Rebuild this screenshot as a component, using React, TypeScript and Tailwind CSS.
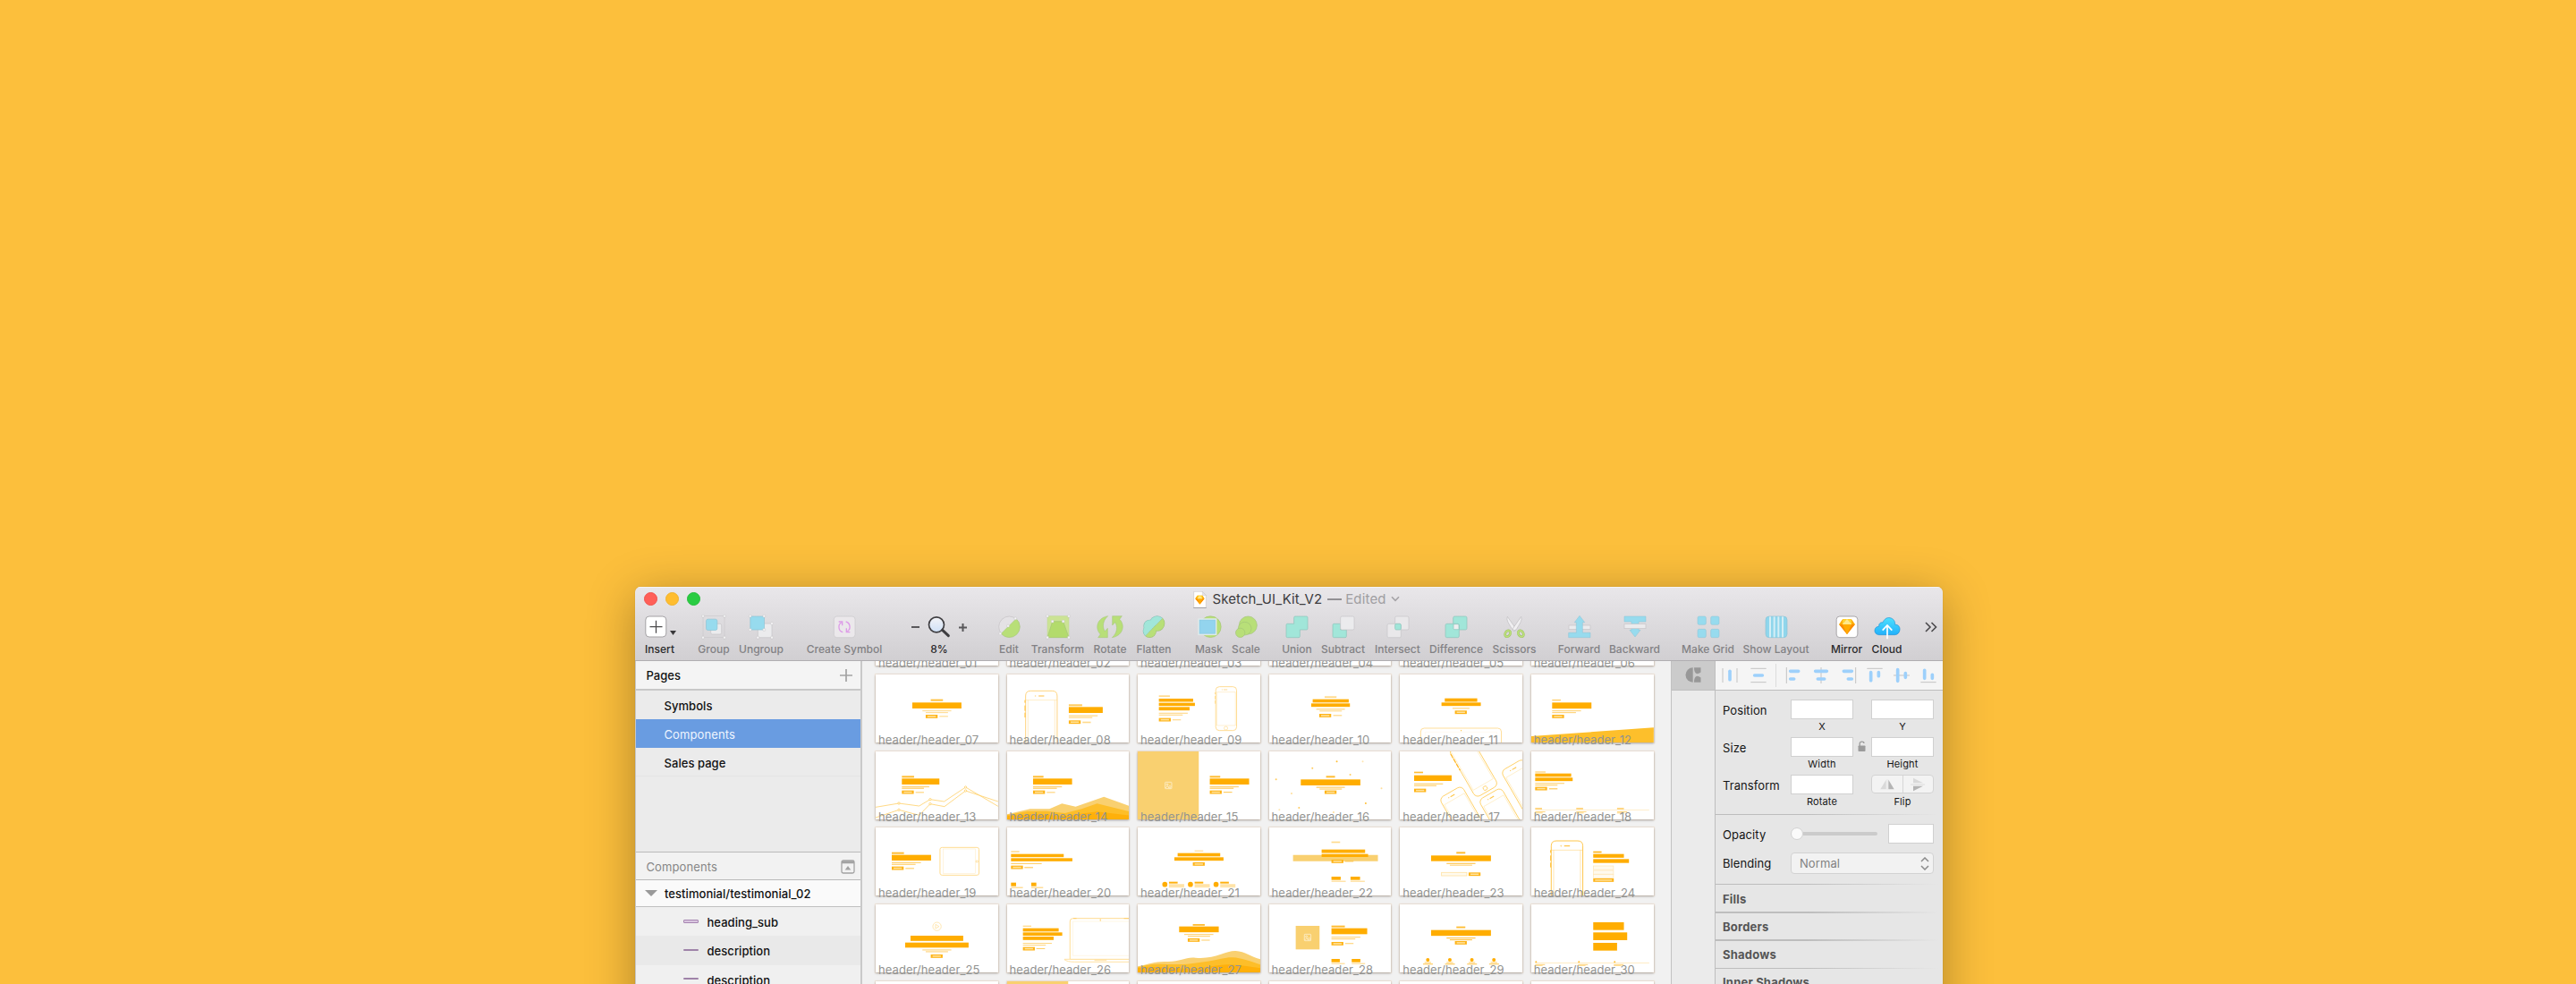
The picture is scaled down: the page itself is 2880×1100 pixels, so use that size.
import type { ReactNode } from "react";

/* ---------- palette ---------- */
const AMBER = "#ffad00";
const SAND = "#f9d070";

/* ---------- toolbar ---------- */
const BLUE = "#97dbee";
const BLUE_EDGE = "#8bc3d4";
const GREEN = "#b8df78";
const GREEN_EDGE = "#a3c477";
const TEAL = "#a1e6d9";
const TEAL_EDGE = "#8bc2ba";
const PAPER = "#ebebed";
const PAPER_EDGE = "#c6c4c7";

function Icon({ children }: { children: ReactNode }) {
  return (
    <svg viewBox="0 0 90 84" className="h-[28px] w-[30px] shrink-0" fill="none">
      {children}
    </svg>
  );
}

function Handles({ points }: { points: [number, number][] }) {
  return (
    <>
      {points.map(([x, y]) => (
        <rect key={`${x}-${y}`} x={x - 4} y={y - 4} width="8" height="8" rx="2" fill="#f6f6f7" stroke="#c4c2c5" strokeWidth="1.500" />
      ))}
    </>
  );
}

function Gem({ x, y, s }: { x: number; y: number; s: number }) {
  return (
    <g transform={`translate(${x} ${y}) scale(${s})`}>
      <path d="M12 1 26.500 0 41 1 53 18 26.500 51 0 18Z" fill="#fdad00" />
      <path d="M0 18H53L26.500 51Z" fill="#fb8b00" />
      <path d="M11 18H42L26.500 51Z" fill="#ffab00" />
      <path d="M12 1 26.500 0 41 1 42 18H11Z" fill="#ffd231" />
      <path d="M26.500 0 42 18H11Z" fill="#ffe88a" />
      <path d="M12 1 11 18H0ZM41 1 53 18H42Z" fill="#fdae0c" />
    </g>
  );
}

const icons: Record<string, ReactNode> = {
  Group: (
    <Icon>
      <rect x="9" y="5" width="72" height="72" stroke="#cbc9cc" strokeWidth="2" />
      <rect x="35" y="31" width="36" height="35" rx="5" fill={PAPER} stroke={PAPER_EDGE} strokeWidth="2" />
      <rect x="19.500" y="15.500" width="37" height="37" rx="6" fill={BLUE} stroke={BLUE_EDGE} strokeWidth="2" />
      <Handles points={[[9, 5], [81, 5], [9, 77], [81, 77]]} />
    </Icon>
  ),
  Ungroup: (
    <Icon>
      <rect x="34" y="30" width="47" height="47" rx="3" fill={PAPER} stroke={PAPER_EDGE} strokeWidth="2" />
      <rect x="8.500" y="6" width="47" height="45" rx="2" fill={BLUE} stroke={BLUE_EDGE} strokeWidth="2" />
      <Handles points={[[8, 5], [55, 5], [8, 51], [55, 51], [81, 30], [34, 77], [81, 77]]} />
    </Icon>
  ),
  "Create Symbol": (
    <Icon>
      <rect x="10" y="6" width="71" height="71" rx="10" fill="#ebe8eb" stroke="#c9c7ca" strokeWidth="2" />
      <g stroke="#dd9be8" strokeWidth="4">
        <path d="M40 59C25 56 22 34 35 27" />
        <path d="M26 24H38V37" strokeLinejoin="miter" />
        <path d="M50 24C65 27 68 49 55 56" />
        <path d="M64 59H52V46" strokeLinejoin="miter" />
      </g>
    </Icon>
  ),
  Edit: (
    <Icon>
      <circle cx="46" cy="41" r="35" fill="#e4e2e5" stroke="#c2c0c3" strokeWidth="2" />
      <path d="M69 14A35.500 35.500 0 1 1 19 64Z" fill={GREEN} stroke={GREEN_EDGE} strokeWidth="1.500" />
      <Handles points={[[67, 13], [42, 38], [16, 64]]} />
    </Icon>
  ),
  Transform: (
    <Icon>
      <rect x="9" y="5" width="72" height="72" fill="#cbe394" stroke="#bfd591" strokeWidth="1.500" />
      <path d="M26 23H62L81 77H9Z" fill="#b3db6c" stroke={GREEN_EDGE} strokeWidth="2" />
      <Handles points={[[9, 5], [81, 5], [9, 77], [81, 77], [26, 23], [62, 23]]} />
    </Icon>
  ),
  Rotate: (
    <Icon>
      {["rotate(0 45 41)", "rotate(180 45 41)"].map((t) => (
        <path
          key={t}
          transform={t}
          d="M38 5C12 9-1 29 3 48 5 57 9 62 13 66L5 77H37V46L28 56C19 43 20 20 38 5Z"
          fill={GREEN}
          stroke={GREEN_EDGE}
          strokeWidth="1.500"
        />
      ))}
    </Icon>
  ),
  Flatten: (
    <Icon>
      <defs>
        <clipPath id="flatten-upper"><path d="M0 0H86L8 81H0Z" /></clipPath>
        <clipPath id="flatten-lower"><path d="M86 0H90V84H8V81Z" /></clipPath>
      </defs>
      {[["upper", TEAL, TEAL_EDGE], ["lower", GREEN, GREEN_EDGE]].map(([k, fill, edge]) => (
        <g key={k} clipPath={`url(#flatten-${k})`}>
          <g stroke={edge} strokeWidth="4">
            <circle cx="56" cy="30" r="24" />
            <circle cx="31" cy="38" r="19" />
            <circle cx="31" cy="55" r="21" />
          </g>
          <g fill={fill}>
            <circle cx="56" cy="30" r="24" />
            <circle cx="31" cy="38" r="19" />
            <circle cx="31" cy="55" r="21" />
          </g>
        </g>
      ))}
      <path d="M73 14 17 71" stroke="#8fbfa0" strokeWidth="1.500" />
    </Icon>
  ),
  Mask: (
    <Icon>
      <circle cx="49" cy="41" r="35.500" fill={GREEN} stroke={GREEN_EDGE} strokeWidth="2" />
      <rect x="9" y="15" width="59" height="52" fill="#93d4ee" stroke="#dfe9e9" strokeWidth="4.500" />
      <rect x="13" y="19" width="51" height="44" stroke="#88c3da" strokeWidth="1" />
    </Icon>
  ),
  Scale: (
    <Icon>
      <circle cx="52" cy="36" r="30" fill={GREEN} stroke={GREEN_EDGE} strokeWidth="2" />
      <circle cx="41" cy="47" r="22" fill={GREEN} stroke={GREEN_EDGE} strokeWidth="2" />
      <circle cx="26" cy="61" r="15.500" fill={GREEN} stroke={GREEN_EDGE} strokeWidth="2" />
    </Icon>
  ),
  Union: (
    <Icon>
      <path d="M39 6H77Q81 6 81 10V47Q81 51 77 51H55V73Q55 77 51 77H13Q9 77 9 73V35Q9 31 13 31H35V10Q35 6 39 6Z" fill={TEAL} stroke={TEAL_EDGE} strokeWidth="2" />
    </Icon>
  ),
  Subtract: (
    <Icon>
      <path d="M35 31H13Q9 31 9 35V73Q9 77 13 77H51Q55 77 55 73V51H35Z" fill={TEAL} stroke={TEAL_EDGE} strokeWidth="2" />
      <rect x="35" y="6" width="46" height="45" rx="5" fill={PAPER} stroke={PAPER_EDGE} strokeWidth="2" />
    </Icon>
  ),
  Intersect: (
    <Icon>
      <rect x="35" y="6" width="46" height="45" rx="5" fill="#e9e8ea" stroke={PAPER_EDGE} strokeWidth="2" />
      <rect x="9" y="31" width="46" height="46" rx="5" fill="#e9e8ea" stroke={PAPER_EDGE} strokeWidth="2" />
      <rect x="35" y="31" width="20" height="20" rx="4" fill={TEAL} stroke={TEAL_EDGE} strokeWidth="2" />
    </Icon>
  ),
  Difference: (
    <Icon>
      <rect x="35" y="6" width="46" height="45" rx="5" fill={TEAL} stroke={TEAL_EDGE} strokeWidth="2" />
      <rect x="9" y="31" width="46" height="46" rx="5" fill={TEAL} stroke={TEAL_EDGE} strokeWidth="2" />
      <rect x="36" y="32" width="18" height="18" rx="3" fill="#eeeef0" stroke={TEAL_EDGE} strokeWidth="2" />
    </Icon>
  ),
  Scissors: (
    <Icon>
      <path d="M22 7Q18 14 24 26L38 50 48 55 50 47Z" fill="#f0eff1" stroke="#bdbbbe" strokeWidth="2" />
      <path d="M68 7Q72 14 66 26L52 50 42 55 40 47Z" fill="#f0eff1" stroke="#bdbbbe" strokeWidth="2" />
      <ellipse cx="23" cy="64" rx="8" ry="11" transform="rotate(35 23 64)" stroke="#9dbd68" strokeWidth="8" />
      <ellipse cx="23" cy="64" rx="8" ry="11" transform="rotate(35 23 64)" stroke="#bce07a" strokeWidth="5" />
      <ellipse cx="67" cy="64" rx="8" ry="11" transform="rotate(-35 67 64)" stroke="#9dbd68" strokeWidth="8" />
      <ellipse cx="67" cy="64" rx="8" ry="11" transform="rotate(-35 67 64)" stroke="#bce07a" strokeWidth="5" />
    </Icon>
  ),
  Forward: (
    <Icon>
      <rect x="9" y="36" width="72" height="14" fill={PAPER} stroke={PAPER_EDGE} strokeWidth="2" />
      <path d="M45 4 62 26H55V61H81V77H8V61H34V26H28Z" fill={BLUE} stroke={BLUE_EDGE} strokeWidth="1.500" />
    </Icon>
  ),
  Backward: (
    <Icon>
      <path d="M9 6H81V24H57V52H63L45 75 27 52H33V24H9Z" fill={BLUE} stroke={BLUE_EDGE} strokeWidth="1.500" />
      <rect x="9" y="32" width="72" height="15" fill={PAPER} stroke={PAPER_EDGE} strokeWidth="2" />
    </Icon>
  ),
  "Make Grid": (
    <Icon>
      {[[9, 6], [53, 6], [9, 49], [53, 49]].map(([x, y]) => (
        <rect key={`${x}${y}`} x={x} y={y} width="28" height="28" rx="5" fill={BLUE} stroke={BLUE_EDGE} strokeWidth="1.500" />
      ))}
    </Icon>
  ),
  "Show Layout": (
    <Icon>
      <rect x="9" y="6" width="72" height="71" rx="12" fill="#8fd6ec" stroke={BLUE_EDGE} strokeWidth="2" />
      {[19, 33, 47, 61].map((x) => (
        <rect key={x} x={x + 2} y="7" width="6" height="69" fill="#d4eef5" />
      ))}
    </Icon>
  ),
  Mirror: (
    <Icon>
      <rect x="9.500" y="6" width="71" height="71" rx="11" fill="#fff" stroke="#9b999c" strokeWidth="2.500" />
      <Gem x={18.5} y={15} s={1} />
    </Icon>
  ),
  Cloud: (
    <Icon>
      <defs>
        <linearGradient id="cloud-fill" x1="0" y1="0" x2="0" y2="1">
          <stop offset="0" stopColor="#4ee0fd" />
          <stop offset="1" stopColor="#22b1fb" />
        </linearGradient>
      </defs>
      <path
        d="M17 68C7 67 2 60 3 52 4 44 10 40 17 40 16 30 23 25 30 27 34 15 44 9 54 11 66 13 72 23 71 34 82 33 88 42 87 51 86 61 79 68 70 68Z"
        fill="url(#cloud-fill)"
        stroke="#2393d6"
        strokeWidth="2"
      />
      <path d="M45 82V38M29 53 45 36 61 53" stroke="#fff" strokeWidth="5" />
    </Icon>
  ),
};

function Tool({ label, className, active }: { label: string; className: string; active?: boolean }) {
  return (
    <div className={`flex shrink-0 flex-col items-center ${className}`}>
      {icons[label]}
      <span className={`mt-[2.500px] leading-4 ${active ? "text-[#2b2a2c]" : "text-[#828184]"}`}>{label}</span>
    </div>
  );
}

function TitleBar() {
  return (
    <div className="flex h-[27px] items-center">
      <div className="ml-[9.500px] flex gap-[9px]">
        <span className="size-[15px] rounded-full border border-[#f0524c] bg-[#ff5f58]" />
        <span className="size-[15px] rounded-full border border-[#efb22b] bg-[#ffbd2f]" />
        <span className="size-[15px] rounded-full border border-[#25be3b] bg-[#29cc42]" />
      </div>
      <svg viewBox="0 0 45 57" className="mt-[1px] ml-[551.500px] h-[19px] w-[15px]">
        <path d="M2 1H31L43 14V55H2Z" fill="#fff" stroke="#bcbabd" strokeWidth="1.500" />
        <path d="M31 1V14H43Z" fill="#e6e4e7" stroke="#bcbabd" strokeWidth="1" />
        <path d="M1 55.500H44" stroke="#9a989b" strokeWidth="2.500" />
        <Gem x={7} y={14} s={0.58} />
      </svg>
      <span className="ml-[6.500px] text-[15px] leading-5 tracking-[0.090px] text-[#3d3c3e]">Sketch_UI_Kit_V2</span>
      <span className="mt-[1px] ml-[6px] h-[1.500px] w-[16px] bg-[#929094]" />
      <span className="ml-[4px] text-[15px] leading-5 tracking-[0.150px] text-[#a09ea2]">Edited</span>
      <svg viewBox="0 0 10 7" className="ml-[5px] h-[7px] w-[10px]" fill="none">
        <path d="M1 1.200 5 5.300 9 1.200" stroke="#a5a3a7" strokeWidth="1.600" />
      </svg>
    </div>
  );
}

function Toolbar() {
  return (
    <div className="mt-[4px] flex text-[12px] font-medium tracking-[0.020px] whitespace-nowrap">
      <div className="ml-[11px] flex w-[34px] shrink-0 flex-col">
        <svg viewBox="0 0 36 28" className="h-[28px] w-[36px]" fill="none">
          <rect x="0.800" y="2" width="23" height="23" rx="4" fill="#fff" stroke="#a3a1a4" />
          <path d="M5.500 13.700H19.500M12.500 6.700V20.700" stroke="#4c4b4d" strokeWidth="1.300" />
          <path d="M28 18H35L31.500 23Z" fill="#39383a" />
        </svg>
        <span className="mt-[2.500px] leading-4 text-[#2b2a2c]">Insert</span>
      </div>
      <Tool label="Group" className="ml-[25.500px] w-[35px]" />
      <Tool label="Ungroup" className="ml-[11px] w-[49px]" />
      <Tool label="Create Symbol" className="ml-[26.500px] w-[84px]" />
      <div className="ml-[33px] flex w-[62px] shrink-0 flex-col items-center">
        <div className="flex w-full items-center justify-between">
          <span className="h-[2px] w-[9px] bg-[#59585b]" />
          <svg viewBox="0 0 90 84" className="h-[28px] w-[30px]" fill="none">
            <defs>
              <linearGradient id="lens" x1="0" y1="0" x2="0" y2="1">
                <stop offset="0" stopColor="#f3f3f6" />
                <stop offset="1" stopColor="#cfe0f6" />
              </linearGradient>
            </defs>
            <circle cx="36" cy="34" r="25.500" fill="url(#lens)" stroke="#3f3e41" strokeWidth="5" />
            <path d="M56 52 76 71" stroke="#3f3e41" strokeWidth="9" strokeLinecap="round" />
          </svg>
          <svg viewBox="0 0 9 9" className="size-[9px]">
            <path d="M0 4.500H9M4.500 0V9" stroke="#59585b" strokeWidth="2" />
          </svg>
        </div>
        <span className="mt-[2.500px] leading-4 text-[#2b2a2c]">8%</span>
      </div>
      <Tool label="Edit" className="ml-[36px] w-[22px]" />
      <Tool label="Transform" className="ml-[14.500px] w-[58px]" />
      <Tool label="Rotate" className="ml-[11px] w-[37px]" />
      <Tool label="Flatten" className="ml-[11px] w-[39px]" />
      <Tool label="Mask" className="ml-[27.500px] w-[29px]" />
      <Tool label="Scale" className="ml-[11.500px] w-[31px]" />
      <Tool label="Union" className="ml-[25.500px] w-[32px]" />
      <Tool label="Subtract" className="ml-[11px] w-[49px]" />
      <Tool label="Intersect" className="ml-[11.500px] w-[50px]" />
      <Tool label="Difference" className="ml-[11px] w-[59px]" />
      <Tool label="Scissors" className="ml-[12px] w-[47px]" />
      <Tool label="Forward" className="ml-[26px] w-[46px]" />
      <Tool label="Backward" className="ml-[11.500px] w-[55px]" />
      <Tool label="Make Grid" className="ml-[25.500px] w-[58px]" />
      <Tool label="Show Layout" className="ml-[10.500px] w-[73px]" />
      <Tool label="Mirror" className="ml-[25.500px] w-[34px]" active />
      <Tool label="Cloud" className="ml-[11.500px] w-[33px]" active />
      <svg viewBox="0 0 14 12" className="mt-[8px] ml-[26px] h-[12px] w-[14px]" fill="none">
        <path d="M1 1 6 6 1 11M7.500 1 12.500 6 7.500 11" stroke="#4b4a4d" strokeWidth="1.600" />
      </svg>
    </div>
  );
}

/* ---------- left sidebar ---------- */
function Layer({ name, boxed, striped }: { name: string; boxed?: boolean; striped?: boolean }) {
  return (
    <div className={`flex h-[32.300px] shrink-0 items-center ${striped ? "bg-[#e9e9e9]" : "bg-[#f0f0f0]"}`}>
      {boxed ? (
        <span className="-mt-[1px] ml-[53px] h-[4px] w-[17px] rounded-[1px] border border-[#a786b1] bg-[#d9c6df]" />
      ) : (
        <span className="-mt-[1px] ml-[53px] h-[2px] w-[17px] rounded-[1px] bg-[#9f83a8]" />
      )}
      <span className="mt-[2px] ml-[9.500px]">{name}</span>
    </div>
  );
}

function Sidebar() {
  return (
    <aside className="flex w-[254px] shrink-0 flex-col border-r-2 border-l border-r-[#c9c9c9] border-l-[#c6c6c6] bg-[#ebebeb] text-[13px] leading-5 font-medium tracking-[0.050px] text-[#111]">
      <div className="flex h-[33px] shrink-0 items-center justify-between border-b-2 border-[#c8c8c8] bg-[#f4f4f4] pr-[9px] pl-[11.500px]">
        Pages
        <svg viewBox="0 0 14 14" className="size-[14px]">
          <path d="M0 7H14M7 0V14" stroke="#a2a2a2" strokeWidth="1.700" />
        </svg>
      </div>
      <div className="flex h-[32px] shrink-0 items-center pt-[2px] pl-[31.500px]">Symbols</div>
      <div className="flex h-[32px] shrink-0 items-center bg-[#699ce1] pt-[2px] pl-[31.500px] font-normal tracking-[0.100px] text-[#eef5ff]">Components</div>
      <div className="flex h-[32px] shrink-0 items-center border-b border-[#e4e4e4] pt-[3px] pl-[31.500px]">Sales page</div>
      <div className="h-[84px] shrink-0" />
      <div className="flex h-[31.500px] shrink-0 items-center justify-between border-t border-b border-[#bababa] bg-[#f2f2f2] pt-[1.500px] pr-[6.500px] pl-[11.500px] font-normal tracking-[0.100px] text-[#868686]">
        Components
        <svg viewBox="0 0 16 16" className="size-[16px]" fill="none">
          <rect x="1" y="1" width="14" height="14" rx="1.800" stroke="#a3a3a3" strokeWidth="1.300" />
          <path d="M1 1.500H15V4.300H1Z" fill="#a3a3a3" />
          <path d="M8 7 11.300 11.500H4.700Z" fill="#a3a3a3" />
        </svg>
      </div>
      <div className="flex h-[30.500px] shrink-0 items-center border-b border-[#c0c0c0] bg-[#fafafa] pt-[0.500px] pl-[9.500px]">
        <svg viewBox="0 0 14 7" className="h-[7px] w-[14px]">
          <path d="M0 0H14L7 7Z" fill="#9a9a9a" />
        </svg>
        <span className="ml-[8.500px]">testimonial/testimonial_02</span>
      </div>
      <Layer name="heading_sub" boxed />
      <Layer name="description" striped />
      <Layer name="description" />
    </aside>
  );
}

/* ---------- artboards ---------- */
type Bar = [x: number, y: number, w: number, h: number, opacity: number];

function Bars({ items }: { items: Bar[] }) {
  return (
    <>
      {items.map(([x, y, w, h, o]) => (
        <rect key={`${x}-${y}`} x={x} y={y} width={w} height={h} fill={AMBER} opacity={o} />
      ))}
    </>
  );
}

function Btn({ x, y, w = 40 }: { x: number; y: number; w?: number }) {
  return (
    <g>
      <rect x={x} y={y} width={w} height="11.500" fill="#ffb417" />
      <rect x={x + 6} y={y + 3.5} width={w - 12} height="4.500" fill="#ffe3a0" />
    </g>
  );
}

function Picture({ x, y }: { x: number; y: number }) {
  return (
    <g transform={`translate(${x} ${y})`} fill="none" stroke="#fdeecb" strokeWidth="2.500">
      <rect x="1" y="1" width="22" height="22" rx="2" />
      <circle cx="8" cy="9" r="3" />
      <circle cx="17" cy="17" r="3.500" />
      <path d="M2 21 9 14 14 21" />
    </g>
  );
}

function TiltedPhone({ x, y, flip }: { x: number; y: number; flip?: boolean }) {
  return (
    <g transform={`translate(${x} ${y}) rotate(-30)`} fill="none" stroke="#ffcd5e">
      <g transform={flip ? "translate(0 -185)" : undefined}>
        <rect width="87" height="185" rx="16" strokeWidth="2.500" />
        <path d={flip ? "M5 0V158H82V0" : "M5 185V27H82V185"} strokeWidth="1.200" opacity="0.700" />
        {flip ? (
          <>
            <circle cx="43" cy="172" r="7" strokeWidth="2.500" />
            <path d="M0 15V78" stroke="#ffb625" strokeWidth="3.500" strokeDasharray="14 5" />
          </>
        ) : (
          <path d="M36 14H52M28 14H31" strokeWidth="3" stroke="#ffc545" />
        )}
      </g>
    </g>
  );
}

function Phone({ x, y, strong }: { x: number; y: number; strong?: boolean }) {
  return (
    <g transform={`translate(${x} ${y})`} fill="none" stroke={strong ? "#ffc64b" : "#ffd480"}>
      <path d="M1 194V18Q1 1 18 1H90Q107 1 107 18V194" strokeWidth="3" />
      <path d="M9 194V32M99 194V32M1 32H107" strokeWidth="2.500" opacity="0.500" />
      <path d="M46 18H62" strokeWidth="4" strokeLinecap="round" />
      <circle cx="34" cy="18" r="1.500" strokeWidth="2" />
      <path d="M-1 32V41M-1 50V68M-1 74V90" strokeWidth="3" stroke="#ffbe35" />
    </g>
  );
}

const cards: Record<string, { x: number; y: number; art: ReactNode }> = {
  "07": { x: 57, y: 56, art: (
    <>
      <Bars items={[[242, 139, 41, 6, 0.75], [180, 150, 165, 20, 1], [214, 176, 97, 3.5, 0.4], [225, 182, 75, 3.5, 0.4], [271, 195, 29, 3, 0.5]]} />
      <Btn x={225} y={191} />
    </>
  ) },
  "08": { x: 498, y: 56, art: (
    <>
      <Phone x={559} y={110} />
      <Bars items={[[705, 156, 45, 6, 0.65], [705, 165, 114, 20, 1], [705, 192, 97, 5, 0.35], [705, 198, 79, 5, 0.35], [751, 214, 28, 5, 0.45]]} />
      <Btn x={705} y={210} />
    </>
  ) },
  "09": { x: 36, y: 56, art: (
    <>
      <Bars items={[[107, 126, 37, 5, 0.45], [107, 137, 115, 10.5, 1], [107, 151, 121, 10.5, 1], [107, 165, 103, 11.5, 1], [107, 184, 97, 4, 0.4], [107, 190, 80, 4, 0.4], [153, 206, 28, 4, 0.4]]} />
      <Btn x={107} y={202} />
      <g fill="none" stroke="#ffdc93">
        <rect x="298" y="97" width="70" height="147" rx="12" strokeWidth="3" />
        <path d="M302 115H364V227H302Z" strokeWidth="2" opacity="0.600" />
        <circle cx="332" cy="236" r="6" strokeWidth="2" />
        <path d="M324 107H337M318 107H321" strokeWidth="3.500" />
        <path d="M296 116V122M296 128V139M296 143V154" strokeWidth="3" />
      </g>
    </>
  ) },
  "10": { x: 475, y: 56, art: (
    <>
      <Bars items={[[661, 129, 40, 5.5, 0.45], [621, 139, 121, 11, 1], [616, 153, 130, 11.5, 1], [633, 171, 96, 3, 0.6], [644, 177, 75, 3, 0.5], [690, 192, 29, 3, 0.6]]} />
      <Btn x={643} y={188} />
    </>
  ) },
  "11": { x: 75, y: 56, art: (
    <>
      <Bars items={[[226, 136, 109, 11.5, 1], [215, 150, 132, 11.5, 1], [252, 168, 57, 3, 0.6]]} />
      <Btn x={260} y={177} />
      <g fill="none" stroke="#ffdc93">
        <path d="M145 286V248Q145 236 157 236H404Q416 236 416 248V286" strokeWidth="2.800" />
        <path d="M160 286V249H401V286" strokeWidth="1" opacity="0.400" />
      </g>
      <circle cx="281" cy="244" r="2" fill="#ffc545" />
    </>
  ) },
  "12": { x: 515, y: 56, art: (
    <>
      <Bars items={[[585, 140, 29, 4, 0.6], [585, 150, 132, 20.5, 1], [585, 176, 97, 3.5, 0.5], [585, 182, 80, 3.5, 0.5]]} />
      <Btn x={585} y={191} />
      <path d="M515 263 926 234V286H515Z" fill="#fdbf2b" />
    </>
  ) },
  "13": { x: 57, y: 314, art: (
    <>
      <Bars items={[[145, 396, 41, 6, 0.8], [145, 405, 126, 20, 1], [145, 430, 92, 4.5, 0.5], [145, 435.5, 74, 4.5, 0.5], [191, 450, 28, 3, 0.6]]} />
      <Btn x={145} y={445} />
      <g fill="none" stroke="#ffd16c" strokeWidth="2.500">
        <path d="M57 501 135 488 203 497 240 475 287 482 359 434 468 498" />
        <path d="M57 536 135 510 203 528 240 490 288 499 359 446 468 482" />
        {[[135, 488], [240, 475], [359, 434], [135, 510], [240, 490], [359, 446]].map(([x, y]) => (
          <circle key={`${x}-${y}`} cx={x} cy={y} r="3.500" fill="#fff" />
        ))}
      </g>
    </>
  ) },
  "14": { x: 498, y: 314, art: (
    <>
      <Bars items={[[585, 396, 35, 6, 0.8], [585, 405, 131, 20, 1], [585, 430, 97, 4.5, 0.5], [585, 435.5, 80, 4.5, 0.5], [631, 450, 28, 3, 0.6]]} />
      <Btn x={585} y={445} />
      <path d="M498 525 575 507H640L682 489 728 499 823 466 908 497V545H498Z" fill={SAND} />
      <path d="M498 527 565 515 630 514 692 521 748 507 800 489 908 515V545H498Z" fill="#fdbe29" />
      <path d="M498 531 590 524 690 531 800 516 908 529V545H498Z" fill="#ffb00a" />
    </>
  ) },
  "15": { x: 36, y: 314, art: (
    <>
      <path d="M36 314H241V545H36Z" fill={SAND} />
      <Picture x={127} y={416} />
      <Bars items={[[278, 396, 35, 6, 0.8], [278, 405, 132, 20, 1], [278, 430, 97, 4.5, 0.5], [278, 435.5, 80, 4.5, 0.5], [324, 449, 29, 3.5, 0.6]]} />
      <Btn x={278} y={445} />
    </>
  ) },
  "16": { x: 475, y: 314, art: (
    <>
      <Bars items={[[666, 396, 30, 6, 0.8], [581, 408, 200, 20, 1], [633, 432, 96, 5, 0.45], [644, 438, 75, 4.5, 0.45]]} />
      <Btn x={661} y={445} />
      {[[702, 348, 1], [789, 348, 0.4], [620, 370, 0.8], [747, 392, 0.8], [498, 408, 0.8], [852, 438, 0.5], [550, 455, 0.5], [799, 488, 1], [575, 503, 0.8], [509, 510, 0.4], [691, 518, 0.5]].map(([x, y, o]) => (
        <circle key={x} cx={x} cy={y} r="3" fill="#ffbe35" opacity={o} />
      ))}
    </>
  ) },
  "17": { x: 75, y: 314, art: (
    <>
      <Bars items={[[123, 382, 30, 5, 0.8], [123, 394, 126, 19, 1], [123, 421, 97, 4, 0.5], [123, 427, 75, 4, 0.5]]} />
      <Btn x={123} y={439} />
      <TiltedPhone x={331} y={470} flip />
      <TiltedPhone x={207} y={472} />
      <TiltedPhone x={339} y={478} />
      <TiltedPhone x={414} y={381} />
    </>
  ) },
  "18": { x: 515, y: 314, art: (
    <>
      <Bars items={[[528, 381, 35, 4, 0.5], [528, 388, 121, 11, 1], [528, 402, 126, 11.5, 1], [528, 419, 98, 4, 0.45], [528, 425, 75, 4, 0.45], [575, 438, 28, 3, 0.8], [528, 510, 383, 2, 0.3]]} />
      <Btn x={528} y={433} />
      {[528, 666, 803].map((x) => (
        <Bars key={x} items={[[x, 504, 23, 3.5, 0.8], [x, 515, 34, 3, 0.5], [x, 519, 25, 3, 0.5]]} />
      ))}
    </>
  ) },
  "19": { x: 57, y: 46, art: (
    <>
      <Bars items={[[111, 129, 41, 6, 0.8], [111, 138, 132, 19, 1], [111, 162, 98, 4, 0.5], [111, 168, 80, 4, 0.5], [157, 181, 29, 4.5, 0.45]]} />
      <Btn x={111} y={177} />
      <g fill="none" stroke="#ffdc93">
        <rect x="273" y="113" width="131" height="93" rx="7" strokeWidth="3" />
        <rect x="284" y="118" width="108" height="82" strokeWidth="1.500" opacity="0.600" />
        <circle cx="397" cy="160" r="3.500" strokeWidth="2.500" />
      </g>
    </>
  ) },
  "20": { x: 498, y: 46, art: (
    <>
      <Bars items={[[511, 125, 28, 4, 0.5], [511, 135, 177, 10.5, 1], [511, 149, 206, 10.5, 1], [511, 166, 103, 3, 0.6], [556, 178, 29, 4.5, 0.5], [511, 231, 17, 12, 1], [579, 231, 17, 12, 1], [511, 246, 40, 3, 0.6], [579, 246, 40, 3, 0.6]]} />
      <Btn x={511} y={174} />
    </>
  ) },
  "21": { x: 36, y: 46, art: (
    <>
      <Bars items={[[227, 123, 29, 3, 0.5], [170, 132, 143, 11, 1], [159, 146, 165, 11.5, 1]]} />
      <Btn x={221} y={163} />
      {[0, 86, 172].map((d) => (
        <g key={d}>
          <circle cx={127 + d} cy="237" r="8.500" fill={AMBER} />
          <Bars items={[[141 + d, 228, 29, 6, 0.95], [141 + d, 237, 51, 3, 0.65], [141 + d, 243, 51, 3, 0.65]]} />
        </g>
      ))}
    </>
  ) },
  "22": { x: 475, y: 46, art: (
    <>
      <path d="M555 138H840V159H555Z" fill={SAND} />
      <Bars items={[[684, 93, 29, 5, 0.45], [651, 120, 146, 11.5, 1], [651, 135, 156, 10, 1], [729, 158, 29, 3.5, 0.6], [684, 211, 31, 11, 1], [748, 211, 32, 11, 1], [684, 225, 48, 3, 0.5], [748, 225, 48, 3, 0.5]]} />
      <Btn x={684} y={154} />
    </>
  ) },
  "23": { x: 75, y: 46, art: (
    <>
      <Bars items={[[265, 128, 30, 6, 0.8], [180, 140, 201, 19, 1], [232, 165, 97, 4, 0.6], [243, 171, 75, 3, 0.6]]} />
      <rect x="215" y="197" width="85" height="11" fill="#fffaee" stroke="#ffe2a4" strokeWidth="2.500" />
      <Btn x={306} y={197} />
    </>
  ) },
  "24": { x: 515, y: 46, art: (
    <>
      <Phone x={581} y={90} strong />
      <Bars items={[[723, 126, 28, 5, 0.9], [723, 135, 103, 12.5, 1], [723, 152, 120, 13, 1]]} />
      {[175, 190, 203].map((y) => (
        <rect key={y} x="724" y={y} width="67" height="12.500" fill="#fffaee" stroke="#ffe6b3" strokeWidth="2" />
      ))}
      <Btn x={723} y={217} w={69} />
    </>
  ) },
  "25": { x: 57, y: 303, art: (
    <>
      <circle cx="263" cy="377" r="14" fill="none" stroke="#ffe2a4" strokeWidth="2.500" />
      <path d="M258 370 270 377 258 384Z" fill="none" stroke="#ffe2a4" strokeWidth="2.500" />
      <Bars items={[[174, 408, 177, 17.5, 1], [156, 431, 213, 17, 1], [214, 454, 97, 3.5, 0.5], [225, 460, 75, 3.5, 0.5]]} />
      <Btn x={242} y={471} />
    </>
  ) },
  "26": { x: 498, y: 303, art: (
    <>
      <Bars items={[[551, 374, 28, 4, 0.45], [551, 383, 120, 11, 1], [551, 397, 132, 11, 1], [551, 411, 103, 11.5, 1], [551, 432, 97, 3, 0.5], [551, 438, 77, 3, 0.5], [596, 450, 29, 3, 0.6]]} />
      <Btn x={551} y={446} />
      <g fill="none" stroke="#ffdc93">
        <path d="M910 350H719Q709 350 709 360V487H910" strokeWidth="3" />
        <path d="M719 475V360H908M719 475H908" strokeWidth="1.200" opacity="0.600" />
        <path d="M690 487H709M690 488Q700 496 725 496H910M791 491H832" strokeWidth="2.500" />
        <path d="M720 350H731M890 350H908M811 352V359" strokeWidth="3" stroke="#ffcf68" />
      </g>
    </>
  ) },
  "27": { x: 36, y: 303, art: (
    <>
      <Bars items={[[221, 369, 40, 5.5, 0.8], [175, 377, 133, 19.5, 1], [192, 402, 98, 3.5, 0.5], [204, 408, 75, 3.5, 0.5], [250, 421, 28, 4, 0.45]]} />
      <Btn x={204} y={417} />
      <path d="M36 511C75 503 95 494 130 495 180 497 195 478 230 482 295 488 330 458 365 459 395 460 420 480 448 487V533H36Z" fill={SAND} />
      <path d="M36 514C90 498 120 504 160 504 210 506 235 497 270 494 310 488 330 480 355 481 385 483 410 493 448 505V533H36Z" fill="#fdbe29" />
      <path d="M36 517C90 509 140 516 200 518 250 520 300 505 340 505 380 506 410 512 448 517V533H36Z" fill="#ffb00a" />
    </>
  ) },
  "28": { x: 475, y: 303, art: (
    <>
      <path d="M564 375H644V454H564Z" fill={SAND} />
      <Picture x={592} y={402} />
      <Bars items={[[684, 374, 45, 6, 0.8], [684, 383, 120, 20, 1], [684, 411, 97, 3.5, 0.5], [684, 417, 80, 3.5, 0.5], [730, 432, 28, 4, 0.45], [684, 486, 28, 11, 1], [752, 486, 29, 11, 1], [684, 500, 45, 3, 0.5], [752, 500, 45, 3, 0.5]]} />
      <Btn x={684} y={429} />
    </>
  ) },
  "29": { x: 75, y: 303, art: (
    <>
      <Bars items={[[265, 377, 30, 5.5, 0.8], [180, 389, 201, 19.5, 1], [232, 414, 97, 3.5, 0.7], [243, 420, 75, 3.5, 0.7]]} />
      <Btn x={260} y={426} />
      {[169, 243, 317, 391].map((x) => (
        <g key={x}>
          <circle cx={x} cy="489" r="6" fill={AMBER} />
          <Bars items={[[x - 11, 496, 22, 3.5, 0.5], [x - 16, 501, 33, 4, 0.55]]} />
        </g>
      ))}
    </>
  ) },
  "30": { x: 515, y: 303, art: (
    <>
      <Bars items={[[723, 363, 103, 26, 1], [723, 397, 114, 26, 1], [723, 432, 80, 26, 1], [528, 498, 383, 2, 0.35]]} />
      {[528, 672, 792].map((x) => (
        <g key={x}>
          <circle cx={x + 3} cy="496" r="3" fill="#ffbe35" />
          <Bars items={[[x, 503.5, 33, 3, 0.55], [x, 507, 25, 3, 0.4]]} />
        </g>
      ))}
    </>
  ) },
  "32": { x: 0, y: 0, art: <path d="M0 0H205V229H0Z" fill={SAND} /> },
};

const numbers = Array.from({ length: 36 }, (_, i) => String(i + 1).padStart(2, "0"));

function Artboard({ id }: { id: string }) {
  const card = cards[id];
  return (
    <div className="relative h-[76px] bg-white shadow-[0_1px_2.500px_rgba(0,0,0,0.3),0_0_1px_1px_rgba(240,190,140,0.2)]">
      {card && (
        <svg viewBox={`${card.x} ${card.y} 411 228`} className="block h-full w-full overflow-hidden" preserveAspectRatio="none">
          {card.art}
        </svg>
      )}
      <span className="absolute top-[64px] left-[3px] text-[13px] leading-[18px] tracking-[0.070px] whitespace-nowrap text-[#929391]">
        header/header_{id}
      </span>
    </div>
  );
}

function Canvas() {
  return (
    <main className="w-[904px] shrink-0 overflow-hidden bg-[#f1f1f1]">
      <div className="-mt-[70.800px] ml-[15px] grid w-[869.500px] grid-cols-6 gap-x-[9.700px] gap-y-[9.700px]">
        {numbers.map((id) => (
          <Artboard key={id} id={id} />
        ))}
      </div>
    </main>
  );
}

/* ---------- inspector ---------- */
const GUIDE = "#c3c3c3";
const ALIGN = "#9dd0fb";

function AlignIcon({ guide, bars, className }: { guide: string; bars: string; className: string }) {
  return (
    <svg viewBox="0 0 54 54" className={`size-[18px] shrink-0 ${className}`} fill="none">
      <path d={guide} stroke={GUIDE} strokeWidth="3" />
      <path d={bars} stroke={ALIGN} strokeWidth="11" strokeLinecap="round" />
    </svg>
  );
}

function Field({ className }: { className: string }) {
  return <div className={`h-[22px] shrink-0 border border-[#d0d0d0] bg-white ${className}`} />;
}

function Row({ label, children, captions }: { label: string; children: ReactNode; captions: [string, string] }) {
  return (
    <div className="h-[42.100px] shrink-0">
      <div className="flex h-[22px] items-center">
        <span className="mt-[2px] w-[76px] shrink-0">{label}</span>
        {children}
      </div>
      <div className="flex pl-[76px] text-[11px] leading-[17px] tracking-[0.150px]">
        <span className="w-[70px] text-center">{captions[0]}</span>
        <span className="ml-[20px] w-[70px] text-center">{captions[1]}</span>
      </div>
    </div>
  );
}

function Rule() {
  return <div className="-ml-[8px] h-[1.300px] shrink-0 bg-linear-to-r from-[#bdbdbd] from-40% to-[#e6e6e6] to-98%" />;
}

function Section({ title }: { title: string }) {
  return (
    <>
      <Rule />
      <div className="flex h-[29.900px] shrink-0 items-center pt-[1px] font-bold tracking-[0.200px] text-[#555]">{title}</div>
    </>
  );
}

function Inspector() {
  return (
    <aside className="flex min-w-0 flex-1 flex-col border-l border-[#bebebe] bg-[#e6e6e6] text-[13px] leading-5 tracking-[0.080px] text-[#141414]">
      <div className="flex h-[32.500px] shrink-0 items-center border-b border-[#bebebe] bg-[#f5f5f5]">
        <AlignIcon className="ml-[7px]" guide="M3 3V51M51 3V51" bars="M27 13V41" />
        <AlignIcon className="ml-[14px]" guide="M1 4H53M1 50H53" bars="M14 27H40" />
        <span className="ml-[10px] h-[26px] w-px bg-[#dcdcdc]" />
        <AlignIcon className="ml-[10px]" guide="M4 0V54" bars="M17 13H44M17 39H29" />
        <AlignIcon className="ml-[13px]" guide="M27 0V54" bars="M8 13H46M16 39H38" />
        <AlignIcon className="ml-[13px]" guide="M50 0V54" bars="M10 13H37M25 39H37" />
        <AlignIcon className="ml-[11px]" guide="M1 4H53" bars="M14 17V44M40 17V29" />
        <AlignIcon className="ml-[12px]" guide="M0 27H54" bars="M14 8V46M40 20V34" />
        <AlignIcon className="ml-[12px]" guide="M1 50H53" bars="M14 10V37M40 25V37" />
      </div>
      <div className="flex flex-col pt-[10.300px] pl-[8px]">
        <Row label="Position" captions={["X", "Y"]}>
          <Field className="w-[70px]" />
          <Field className="ml-[20px] w-[70px]" />
        </Row>
        <Row label="Size" captions={["Width", "Height"]}>
          <Field className="w-[70px]" />
          <svg viewBox="0 0 20 22" className="h-[22px] w-[20px] shrink-0" fill="none">
            <rect x="5.500" y="9.500" width="8" height="6.500" rx="0.800" fill="#9b9b9b" />
            <path d="M7.200 10V7.300Q7.300 5.200 9.700 5.200 11.900 5.200 12 7" stroke="#9b9b9b" strokeWidth="1.300" />
          </svg>
          <Field className="w-[70px]" />
        </Row>
        <Row label="Transform" captions={["Rotate", "Flip"]}>
          <Field className="w-[70px]" />
          <div className="ml-[20px] flex h-[21px] w-[70px] rounded-[4px] border border-[#d3d3d3] bg-[#f3f3f3]">
            <div className="flex flex-1 items-center justify-center border-r border-[#d6d6d6]">
              <svg viewBox="0 0 48 36" className="h-[12px] w-[16px]">
                <path d="M20 2V34H1Z" fill="#d9d9d9" />
                <path d="M28 2V34H47Z" fill="#b4b4b4" />
                <path d="M24 0V36" stroke="#e0e0e0" strokeWidth="2" />
              </svg>
            </div>
            <div className="flex flex-1 items-center justify-center">
              <svg viewBox="0 0 48 48" className="size-[16px]">
                <path d="M9 2V19H42Z" fill="#d9d9d9" />
                <path d="M9 46V29H42Z" fill="#b4b4b4" />
                <path d="M0 24H48" stroke="#dcdcdc" strokeWidth="3" />
              </svg>
            </div>
          </div>
        </Row>
        <div className="h-[1.900px]" />
        <Rule />
        <div className="mt-[10px] flex h-[22px] items-center">
          <span className="mt-[1.500px] w-[76px] shrink-0">Opacity</span>
          <span className="size-[14px] rounded-full border border-[#d2d2d2] bg-[#fafafa]" />
          <span className="h-[4px] w-[83px] rounded-r-full bg-[#cbcbcb]" />
          <Field className="ml-[12px] w-[51px]" />
        </div>
        <div className="mt-[10px] flex h-[24px] items-center">
          <span className="w-[76px] shrink-0">Blending</span>
          <div className="flex h-[24px] w-[160px] items-center justify-between rounded-[4px] border border-[#d2d2d2] bg-[#f2f2f2] pr-[4px] pl-[9px] text-[#818181]">
            Normal
            <svg viewBox="0 0 10 15" className="h-[15px] w-[10px]" fill="none">
              <path d="M1 5 5 1 9 5M1 10 5 14 9 10" stroke="#8b8b8b" strokeWidth="1.500" />
            </svg>
          </div>
        </div>
        <div className="h-[10.800px]" />
        <Section title="Fills" />
        <Section title="Borders" />
        <Section title="Shadows" />
        <Section title="Inner Shadows" />
      </div>
    </aside>
  );
}

function PluginRail() {
  return (
    <div className="w-[49px] shrink-0 border-l border-[#c2c2c2] bg-[#ebebeb]">
      <div className="flex h-[32.500px] items-center justify-center border-b border-[#bfbfbf] bg-[#cbcbcb]">
        <svg viewBox="0 0 54 52" className="h-[17px] w-[18px]" fill="#989898">
          <path d="M26 1V51A25 25 0 0 1 26 1Z" />
          <path d="M30 1H53V17Q47 22 40 22 30 20 30 1Z" />
          <path d="M30 51H53V35Q47 30 40 30 30 32 30 51Z" />
        </svg>
      </div>
    </div>
  );
}

export default function App() {
  return (
    <div className="h-[1100px] w-[2880px] overflow-hidden bg-[#fcbf3c] pt-[656px] pl-[710px] font-['Inter','Liberation_Sans',sans-serif]">
      <div className="h-[640px] w-[1462px] rounded-t-[6px] shadow-[0_10px_54px_rgba(0,0,0,0.31),0_0_1px_rgba(0,0,0,0.25)]">
        <div className="flex h-full w-full flex-col overflow-hidden rounded-t-[6px]">
          <header className="h-[83px] shrink-0 border-b border-[#b0aeb1] bg-linear-to-b from-[#e9e7ea] to-[#d1cfd2] shadow-[inset_0_1px_0_#f5f4f5]">
            <TitleBar />
            <Toolbar />
          </header>
          <div className="flex min-h-0 flex-1">
            <Sidebar />
            <Canvas />
            <PluginRail />
            <Inspector />
          </div>
        </div>
      </div>
    </div>
  );
}
